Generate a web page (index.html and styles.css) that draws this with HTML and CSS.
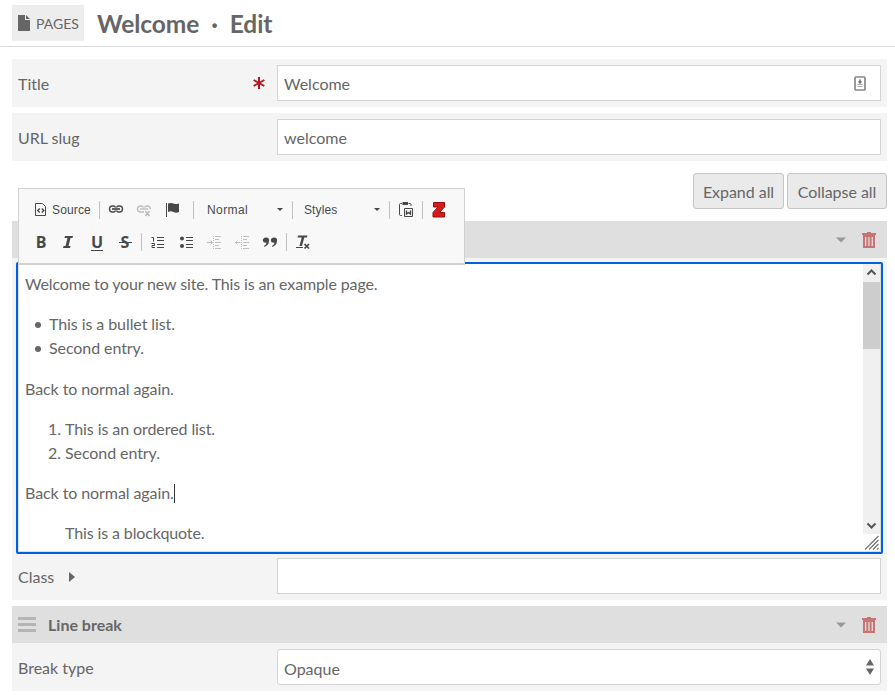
FILE: index.html
```html
<!DOCTYPE html>
<html lang="en">
<head>
<meta charset="utf-8">
<title>Welcome · Edit</title>
<link rel="stylesheet" href="styles.css">
</head>
<body>
<svg class="defs" width="0" height="0">
  <symbol id="trash" viewBox="0 0 14 16"><path d="M5 0h4v1h5v2H0V1h5z"/><path fill-rule="evenodd" d="M1 3h12v13H1zM3 5v9h1.300V5zM6.300 5v9h1.300V5zM9.600 5v9h1.300V5z"/></symbol>
  <symbol id="caret" viewBox="0 0 10 6"><path d="M0 .5h10L5 5.500z"/></symbol>
</svg>
<header class="header">
  <a class="crumb"><svg width="12" height="16" viewBox="0 0 12 16"><path d="M0 0h7v5h5v11H0zM8 0l4 4H8z"/></svg><span>PAGES</span></a>
  <h1>Welcome<span class="dot">·</span>Edit</h1>
</header>
<main>
  <div class="row"><label>Title</label><svg class="star" width="12" height="12" viewBox="0 0 12 12"><path d="M6 0v12M.7 3l10.600 6M11.300 3L.7 9"/></svg>
    <div class="input">Welcome<svg class="autofill" width="12" height="15" viewBox="0 0 12 15"><rect x="1" y="1" width="10" height="13" rx="1" fill="#fff" stroke="#888" stroke-width="1.700"/><path d="M6 3v3M5 5h2v2H5z" stroke="#777" fill="#777"/><path d="M3.500 8h5v1h-5zM3.500 10h5v1h-5z" fill="#aaa"/></svg></div></div>
  <div class="row"><label>URL slug</label><div class="input">welcome</div></div>
  <div class="actions"><button>Expand all</button><button>Collapse all</button></div>

  <section class="block first">
    <div class="bar"><svg class="caret" width="10" height="6"><use href="#caret"/></svg><svg class="trash" width="14" height="16"><use href="#trash"/></svg></div>
    <div class="editor">
      <div class="content">
        <p class="intro">Welcome to your new site. This is an example page.</p>
        <ul><li>This is a bullet list.</li><li>Second entry.</li></ul>
        <p class="after-list">Back to normal again.</p>
        <ol><li>This is an ordered list.</li><li>Second entry.</li></ol>
        <p>Back to normal again.<i class="cursor"></i></p>
        <blockquote>This is a blockquote.</blockquote>
      </div>
      <div class="scroll">
        <svg class="up" width="17" height="17" viewBox="0 0 17 17"><path d="M4.500 10.500L8.500 6.500l4 4"/></svg>
        <div class="thumb"></div>
        <svg class="down" width="17" height="17" viewBox="0 0 17 17"><path d="M4.500 6.500l4 4 4-4"/></svg>
        <svg class="grip" width="17" height="17" viewBox="0 0 17 17"><path d="M2 15.500L15.500 2M6 15.500L15.500 6M10 15.500l5.500-5.500M14 15.500l1.500-1.500"/></svg>
      </div>
    </div>
    <div class="row"><label>Class <svg class="right" width="6" height="10"><path d="M0 0l6 5-6 5z"/></svg></label><div class="input"></div></div>

    <div class="toolbar">
      <div class="tools">
        <span class="btn source"><svg width="16" height="16" viewBox="0 0 16 16"><path class="l box" d="M2.500 1.500h7l3 3v9h-10z"/><path class="l w15" d="M6.700 6.500L4.700 8.500l2 2M8.800 6.500l2 2-2 2"/></svg>Source</span>
        <i class="sep"></i>
        <span class="btn"><svg width="16" height="16" viewBox="0 0 16 16"><path class="l w15" d="M7.500 5.500Q7 4 5.500 4h-1q-3 0-3 3t3 3h1Q7 10 7.500 8.500M8.500 5.500Q9 4 10.500 4h1q3 0 3 3t-3 3h-1Q9 10 8.500 8.500"/><path class="l w2" d="M4 7h8"/></svg></span>
        <span class="btn off"><svg width="16" height="16" viewBox="0 0 16 16"><path class="l w15" d="M7.500 5.500Q7 4 5.500 4h-1q-3 0-3 3t3 3H8M8.500 5.500Q9 4 10.500 4h1q2.500 0 3 3"/><path class="l w15" d="M4 7h8"/><path class="l w2" d="M9.500 9l4 5M13.500 9l-4 5"/></svg></span>
        <span class="btn"><svg width="16" height="16" viewBox="0 0 16 16"><path class="l" d="M2.500 1v14"/><path d="M4 1.500q3-1.200 5.500 0t5.500 0v8.500q-3 1.300-5.500 0T4 10z"/></svg></span>
        <i class="sep group"></i>
        <span class="combo"><span>Normal</span><svg width="6" height="3"><path d="M0 0h6L3 3z"/></svg></span>
        <i class="sep"></i>
        <span class="combo"><span>Styles</span><svg width="6" height="3"><path d="M0 0h6L3 3z"/></svg></span>
        <i class="sep"></i>
        <span class="btn"><svg width="16" height="16" viewBox="0 0 16 16"><path class="l" d="M4 1.500H2.500q-1 0-1 1v10q0 1 1 1H4M10.500 1.500h1.500q1 0 1 1V4M6.500 6.500h8v8h-8z"/><path d="M4.500 0h5.500v3H4.500z"/><path class="l w15" d="M8.500 8.500V12l2-1.500 2 1.500V8.500"/></svg></span>
        <i class="sep"></i>
        <span class="btn"><svg width="16" height="16" viewBox="0 0 16 16"><path d="M2.500.5h11v4.500L8.500 10.500h5v4.500h-11.500v-4.500l5-5.500h-4.500z" fill="#d71a1a" stroke="#921010"/></svg></span>
      </div>
      <div class="tools second">
        <span class="btn bold">B</span><span class="btn italic"><svg width="16" height="16" viewBox="0 0 16 16"><path d="M5 2h8l-.5 2h-2L8.500 12h2l-.5 2H3l.5-2h2L7.500 4h-3z"/></svg></span>
        <span class="btn bold under">U</span><span class="btn bold strike">S</span>
        <i class="sep"></i>
        <span class="btn"><svg width="16" height="16" viewBox="0 0 16 16"><path class="l" d="M7 3.500h7M7 6.500h7M7 10.500h7M7 13.500h7M1.500 3.500h2v4M1.500 9.500h3v2h-2.500v2h3"/></svg></span>
        <span class="btn"><svg width="16" height="16" viewBox="0 0 16 16"><circle cx="4" cy="4.500" r="2"/><circle cx="4" cy="12" r="2"/><path class="l" d="M8 3.500h7M8 6.500h7M8 10.500h7M8 13.500h7"/></svg></span>
        <span class="btn off"><svg width="16" height="16" viewBox="0 0 16 16"><path class="l" d="M1 8.500h5M4.500 6.500l2 2-2 2M9 2.500h6M9 5.500h4M9 8.500h6M9 11.500h4M9 14.500h6"/><path class="l dash" d="M7.500 2v13"/></svg></span>
        <span class="btn off"><svg width="16" height="16" viewBox="0 0 16 16"><path class="l" d="M1.500 8.500h5M3.500 6.500l-2 2 2 2M9 2.500h6M9 5.500h4M9 8.500h6M9 11.500h4M9 14.500h6"/><path class="l dash" d="M7.500 2v13"/></svg></span>
        <span class="btn"><svg width="16" height="16" viewBox="0 0 16 16"><path d="M4 3.500a2.500 2.500 0 0 1 3 3q0 4.500-4.500 6.500l-.5-1q2.500-1.200 2.500-3.200Q1 9 .8 6.300 1.300 3.500 4 3.500zM12 3.500a2.500 2.500 0 0 1 3 3q0 4.500-4.500 6.500l-.5-1q2.500-1.200 2.500-3.200Q9 9 8.800 6.300 9.300 3.500 12 3.500z"/></svg></span>
        <i class="sep"></i>
        <span class="btn"><svg width="16" height="16" viewBox="0 0 16 16"><path d="M3 1.500h9.500l-.5 2H9.300L7 12H4.500l2.200-8.500H2.500z"/><path class="l" d="M1 13.500h7"/><path class="l w2" d="M9.500 10l4.500 4.500M14 10l-4.500 4.500"/></svg></span>
      </div>
    </div>
  </section>

  <section class="block">
    <div class="bar"><span class="handle"></span><strong>Line break</strong><svg class="caret" width="10" height="6"><use href="#caret"/></svg><svg class="trash" width="14" height="16"><use href="#trash"/></svg></div>
    <div class="row"><label>Break type</label><div class="input select">Opaque<svg width="8" height="16"><path d="M0 6.500L4 0l4 6.500zM0 9.500h8L4 16z"/></svg></div></div>
  </section>
</main>
</body>
</html>
```
FILE: styles.css
```css
* { box-sizing: border-box; }
body { margin: 0; height: 695px; overflow: hidden; background: #fff; color: #666; font: 16px/24px Lato, sans-serif; }
svg { display: block; fill: currentColor; flex: none; }
.defs { position: absolute; }
.header { height: 47px; border-bottom: 1px solid #ddd; padding: 5px 12px 0; display: flex; align-items: flex-start; }
.crumb { width: 72px; height: 36px; background: #ededed; display: flex; align-items: center; gap: 6px; padding: 1px 0 0 6px; font-size: 14px; }
.crumb svg { margin-top: -2px; }
h1 { margin: 1px 0 0 13px; font-size: 24.500px; line-height: 36px; font-weight: 700; letter-spacing: -.08px; }
.dot { margin: 0 12px; }
main { padding: 12px 8px 0 12px; }
.row { height: 48px; background: #f4f4f4; display: flex; align-items: center; padding: 0 6px; margin-bottom: 6px; }
.row label { flex: 1; display: flex; align-items: center; padding-top: 1px; }
.right { margin-left: 15px; }
.star { color: #b51a20; stroke: currentColor; stroke-width: 2; margin-right: 12px; }
.input { width: 604px; height: 36px; background: #fff; border: 1px solid #d5d5d5; padding: 1px 6px 0; display: flex; align-items: center; }
.autofill { margin: -1px 8px 0 auto; }
.select { border-radius: 3px; padding-top: 4px; }
.select svg { margin: -4px 6px 0 auto; margin-right: 0; }
.actions { display: flex; justify-content: flex-end; gap: 3px; margin: 12px 0; }
button { width: 91px; height: 36px; padding: 2px 0 0; border: 1px solid #c5c5c5; border-radius: 3px; background: #eaeaea; color: #666; font: inherit; letter-spacing: -.04px; white-space: nowrap; }
button:last-child { width: 100px; }
.block { position: relative; background: #f4f4f4; margin-bottom: 6px; }
.block .row { margin: 0; }
.bar { height: 37px; background: #dfdfdf; display: flex; align-items: center; padding: 0 11px 0 6px; }
.bar strong { margin-left: 12px; padding-top: 1px; }
.handle { width: 18px; height: 15px; border-top: 3px solid #b5b5b5; border-bottom: 3px solid #b5b5b5; background: linear-gradient(#b5b5b5, #b5b5b5) 0 3px / 18px 3px no-repeat; }
.caret { color: #999; margin: 1px 16px 0 auto; }
.trash { color: #c97474; }
.first { height: 379px; }
.first > .row { height: 46px; align-items: flex-start; padding-top: 4px; }
.first > .row label { padding-top: 7px; }
.editor { height: 292px; margin: 4px 4px 0; border: 2px solid #0060df; border-radius: 2px; background: #fff; display: flex; }
.content { flex: 1; border: solid #ddd; border-width: 0 0 1px 1px; padding: 8px 6px 0; overflow: hidden; letter-spacing: -.08px; }
.content p, .content ul, .content ol { margin: 0 0 16px; }
.content .intro { letter-spacing: -.135px; }
.content ul { padding-left: 24px; list-style: none; }
.content ul li::before { content: ""; float: left; width: 6px; height: 6px; margin: 10px 0 0 -14px; border-radius: 50%; background: #666; }
.content .after-list { margin-top: 17px; }
.content ol { padding-left: 40px; }
.content blockquote { margin: 0 40px; letter-spacing: -.12px; }
.cursor { display: inline-block; width: 1px; height: 19px; background: #333; vertical-align: -4px; }
.scroll { width: 18px; border-right: 1px solid #ddd; border-bottom: 1px solid #ddd; background: #f0f0f0; display: flex; flex-direction: column; }
.scroll svg { fill: none; stroke: #555; stroke-width: 2; }
.thumb { height: 67px; background: #cdcdcd; margin-top: 1px; }
.down { margin-top: auto; }
.scroll .grip { background: #fff; stroke: #777; stroke-width: 1.300; }
.toolbar { position: absolute; left: 6px; top: -33px; width: 447px; height: 77px; background: #f8f8f8; border: 1px solid #d1d1d1; border-bottom-width: 2px; padding: 4px 7px; color: #484848; }
.tools { display: flex; height: 33px; align-items: center; font: 12px/16px "Liberation Sans", Arial, sans-serif; }
.second { padding-left: 1px; margin-top: -1px; }
.btn { width: 28px; height: 28px; display: flex; align-items: center; justify-content: center; flex: none; }
.italic { padding-right: 2px; }
.source { width: 71px; justify-content: flex-start; padding-left: 7px; gap: 3px; font-size: 12px; letter-spacing: .15px; }
.sep { width: 1px; height: 18px; margin: 0 2px; background: #c0c0c0; flex: none; }
.group { margin-left: 7px; }
.combo { width: 92px; padding: 0 7px 0 9px; display: flex; align-items: center; justify-content: space-between; letter-spacing: .1px; }
.group + .combo { width: 94px; padding-left: 11px; letter-spacing: .4px; }
.off { color: #bebebe; }
.l { fill: none; stroke: currentColor; stroke-width: 1; }
.w15 { stroke-width: 1.400; }
.w2 { stroke-width: 1.700; }
.dash { stroke-dasharray: 1 1; }
.bold { font: 700 16px/16px "Open Sans", sans-serif; }
.under { text-decoration: underline; text-decoration-thickness: 1px; text-underline-offset: 2px; }
.strike { background: linear-gradient(#484848, #484848) center 14px / 13px 1px no-repeat; }
```
